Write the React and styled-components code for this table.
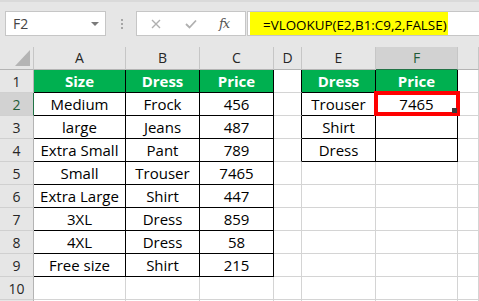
import React from "react";
import styled, { createGlobalStyle } from "styled-components";

const GlobalStyle = createGlobalStyle`
  html, body { margin: 0; padding: 0; background: #ffffff; overflow: hidden; }
  body { font-family: "Open Sans", "Noto Sans", sans-serif; }
  * { box-sizing: border-box; }
`;

const Page = styled.div`
  width: 479px;
  height: 301px;
  overflow: hidden;
  background: #ffffff;
`;

const Toolbar = styled.div`
  display: flex;
  align-items: flex-start;
  height: 47px;
  padding: 9px 0 0 5px;
  background: #e6e6e6;
  border-top: 2px solid #dadada;
`;

const NameBox = styled.div`
  width: 101px;
  height: 25px;
  display: flex;
  align-items: center;
  justify-content: space-between;
  padding: 0 6px 0 7px;
  background: #ffffff;
  border: 1px solid #c6c6c6;
  font-size: 14px;
  color: #444444;
`;

const Caret = styled.span`
  width: 0;
  height: 0;
  border-left: 4px solid transparent;
  border-right: 4px solid transparent;
  border-top: 4px solid #7a7a7a;
`;

const Grip = styled.div`
  display: flex;
  flex-direction: column;
  gap: 2px;
  margin: 8px 13px 0 15px;
`;

const GripDot = styled.span`
  width: 2px;
  height: 2px;
  background: #a6a6a6;
`;

const FxBox = styled.div`
  width: 110px;
  height: 25px;
  display: flex;
  align-items: center;
  gap: 24px;
  padding-left: 14px;
  background: #ffffff;
  border: 1px solid #c6c6c6;
`;

const FxLabel = styled.span`
  font-family: "DejaVu Serif", "Liberation Serif", serif;
  font-style: italic;
  font-size: 13px;
  color: #555555;
  letter-spacing: -1px;
  margin-left: -2px;
`;

const FormulaInput = styled.div`
  flex: 1;
  height: 25px;
  margin-left: 1px;
  display: flex;
  padding: 0 0 0 2px;
  background: #ffffff;
  border: 1px solid #c6c6c6;
  border-right: none;
`;

const Highlight = styled.div`
  width: 198px;
  display: flex;
  align-items: center;
  padding: 2px 0 0 13px;
  background: #ffff00;
  font-size: 13.4px;
  color: #000000;
  white-space: nowrap;
`;

const Sheet = styled.div`
  display: grid;
  grid-template-columns: 34px 92px 74px 74px 28px 74px 82px 1fr;
  grid-template-rows: 23px;
  grid-auto-rows: 23px;
`;

const Corner = styled.div`
  display: flex;
  align-items: flex-end;
  justify-content: flex-end;
  padding: 0 3px 3px 0;
  background: #e6e6e6;
  border-right: 1px solid #c6c6c6;
  border-bottom: 1px solid #b4b4b4;
`;

const CornerMark = styled.span`
  width: 0;
  height: 0;
  border-left: 15px solid transparent;
  border-bottom: 16px solid #b4b4b4;
`;

const ColHeader = styled.div`
  display: flex;
  align-items: center;
  justify-content: center;
  padding-bottom: 2px;
  font-size: 14px;
  background: ${(p) => (p.$active ? "#d2d2d2" : "#e6e6e6")};
  color: ${(p) => (p.$active ? "#1f5c38" : "#262626")};
  border-right: 1px solid #c6c6c6;
  border-bottom: 1px solid ${(p) => (p.$active ? "#217346" : "#b4b4b4")};
`;

const RowHeader = styled.div`
  display: flex;
  align-items: center;
  justify-content: center;
  font-size: 14px;
  background: ${(p) => (p.$active ? "#d2d2d2" : "#e6e6e6")};
  color: ${(p) => (p.$active ? "#1f5c38" : "#262626")};
  border-right: 1px solid ${(p) => (p.$active ? "#217346" : "#b4b4b4")};
  border-bottom: 1px solid #d0d0d0;
`;

const Cell = styled.div`
  position: relative;
  display: flex;
  align-items: center;
  justify-content: center;
  font-size: 15px;
  white-space: nowrap;
  background: ${(p) => (p.$head ? "#00b050" : "#ffffff")};
  color: ${(p) => (p.$head ? "#ffffff" : "#000000")};
  font-weight: ${(p) => (p.$head ? 700 : 400)};
  border-right: 1px solid ${(p) => (p.$right ? "#000000" : "#d4d4d4")};
  border-bottom: 1px solid ${(p) => (p.$bottom ? "#000000" : "#d4d4d4")};
`;

const Selection = styled.div`
  position: absolute;
  z-index: 2;
  left: -2px;
  top: -2px;
  width: 86px;
  height: 25px;
  border: 4px solid #ff0000;
  pointer-events: none;
`;

const FillHandle = styled.span`
  position: absolute;
  right: -1px;
  bottom: -1px;
  width: 5px;
  height: 5px;
  background: #3a3a3a;
`;

const columns = ["A", "B", "C", "D", "E", "F", ""];

const data = [
  ["Size", "Dress", "Price", "", "Dress", "Price"],
  ["Medium", "Frock", "456", "", "Trouser", "7465"],
  ["large", "Jeans", "487", "", "Shirt", ""],
  ["Extra Small", "Pant", "789", "", "Dress", ""],
  ["Small", "Trouser", "7465"],
  ["Extra Large", "Shirt", "447"],
  ["3XL", "Dress", "859"],
  ["4XL", "Dress", "58"],
  ["Free size", "Shirt", "215"],
  [],
  [],
];

function CrossIcon() {
  return (
    <svg width="10" height="10" viewBox="0 0 10 10">
      <path d="M1 1 L9 9 M9 1 L1 9" stroke="#b0b0b0" strokeWidth="1.4" fill="none" />
    </svg>
  );
}

function CheckIcon() {
  return (
    <svg width="12" height="10" viewBox="0 0 12 10">
      <path d="M1 5 L4.5 8.5 L11 1.5" stroke="#b0b0b0" strokeWidth="1.8" fill="none" />
    </svg>
  );
}

export default function App() {
  return (
    <Page>
      <GlobalStyle />
      <Toolbar>
        <NameBox>
          <span>F2</span>
          <Caret />
        </NameBox>
        <Grip>
          <GripDot />
          <GripDot />
          <GripDot />
        </Grip>
        <FxBox>
          <CrossIcon />
          <CheckIcon />
          <FxLabel>fx</FxLabel>
        </FxBox>
        <FormulaInput>
          <Highlight>=VLOOKUP(E2,B1:C9,2,FALSE)</Highlight>
        </FormulaInput>
      </Toolbar>
      <Sheet>
        <Corner>
          <CornerMark />
        </Corner>
        {columns.map((c, i) => (
          <ColHeader key={"h" + i} $active={c === "F"}>
            {c}
          </ColHeader>
        ))}
        {data.map((row, r) => {
          const rowNum = r + 1;
          return (
            <React.Fragment key={"r" + r}>
              <RowHeader $active={rowNum === 2}>{rowNum <= 10 ? rowNum : ""}</RowHeader>
              {columns.map((_, c) => {
                const t1 = rowNum <= 9 && c <= 2;
                const t2 = rowNum <= 4 && (c === 4 || c === 5);
                const right = t1 || t2 || (c === 3 && rowNum <= 4);
                const bottom = t1 || t2;
                const head = rowNum === 1 && (c <= 2 || c === 4 || c === 5);
                const selected = rowNum === 2 && c === 5;
                return (
                  <Cell key={c} $right={right} $bottom={bottom} $head={head}>
                    {row[c] || ""}
                    {selected && (
                      <Selection>
                        <FillHandle />
                      </Selection>
                    )}
                  </Cell>
                );
              })}
            </React.Fragment>
          );
        })}
      </Sheet>
    </Page>
  );
}
